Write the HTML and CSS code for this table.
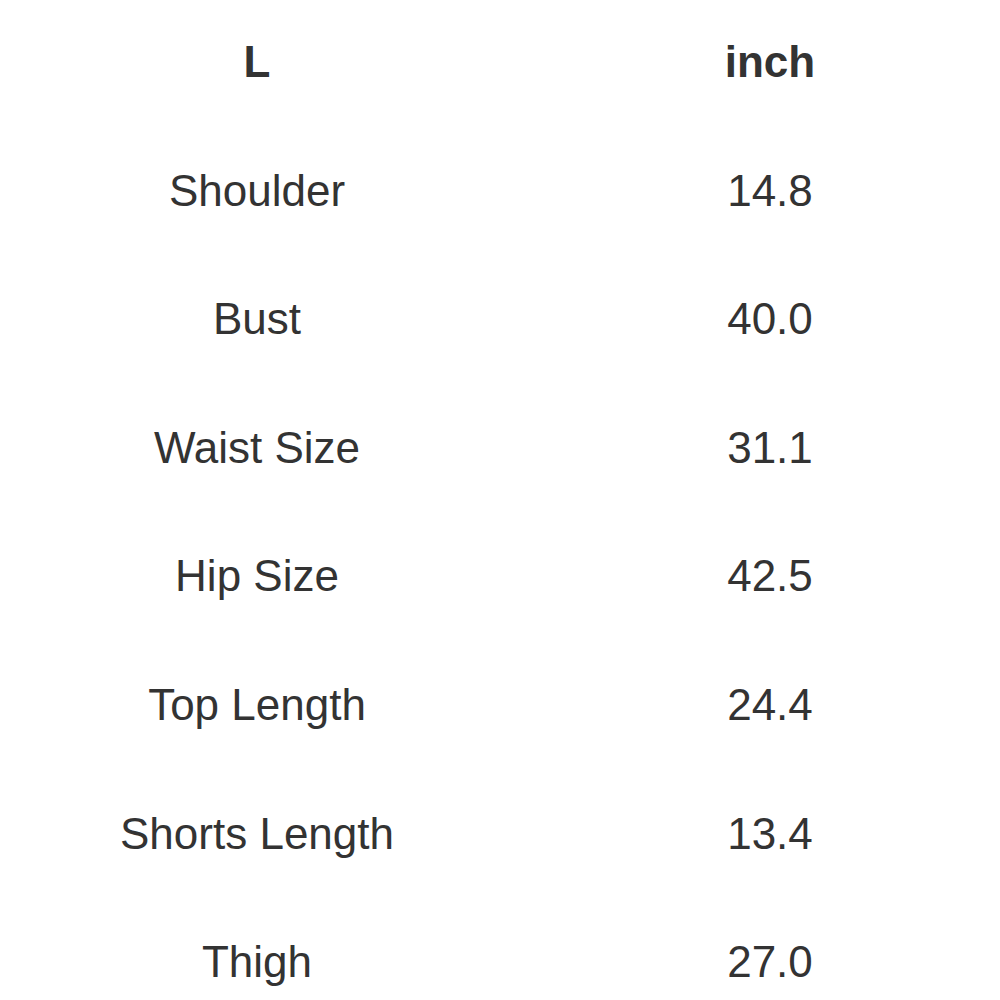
FILE: index.html
```html
<!DOCTYPE html>
<html>
<head>
<meta charset="utf-8">
<link rel="stylesheet" href="styles.css">
</head>
<body>
<div class="size-table">
  <div class="cell head">L</div><div class="cell head">inch</div>
  <div class="cell">Shoulder</div><div class="cell">14.8</div>
  <div class="cell">Bust</div><div class="cell">40.0</div>
  <div class="cell">Waist Size</div><div class="cell">31.1</div>
  <div class="cell">Hip Size</div><div class="cell">42.5</div>
  <div class="cell">Top Length</div><div class="cell">24.4</div>
  <div class="cell">Shorts Length</div><div class="cell">13.4</div>
  <div class="cell">Thigh</div><div class="cell">27.0</div>
</div>
</body>
</html>
```
FILE: styles.css
```css
html, body {
  margin: 0;
  padding: 0;
  background: #fff;
}
body {
  font-family: "Liberation Sans", Arial, sans-serif;
  color: #333;
  overflow: hidden;
}
.size-table {
  display: grid;
  grid-template-columns: 514px 460px;
  column-gap: 26px;
  grid-auto-rows: 128.6px;
  align-items: start;
}
.cell {
  font-size: 44px;
  line-height: 124px;
  text-align: center;
  white-space: nowrap;
}
.head {
  font-weight: bold;
}
```
